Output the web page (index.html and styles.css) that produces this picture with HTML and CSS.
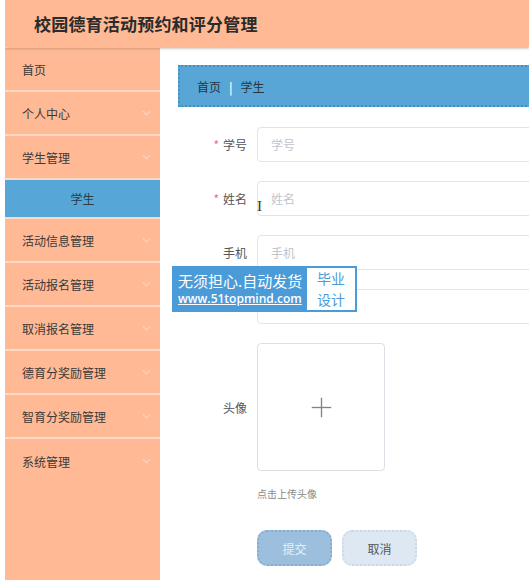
FILE: index.html
```html
<!DOCTYPE html>
<html lang="zh-CN">
<head>
<meta charset="utf-8">
<title>校园德育活动预约和评分管理</title>
<link rel="stylesheet" href="styles.css">
</head>
<body>
<div class="app">
  <header class="topbar">
    <h1 class="title">校园德育活动预约和评分管理</h1>
  </header>
  <div class="layout">
    <nav class="sidebar">
      <div class="menu-item">首页</div>
      <div class="menu-item">个人中心<svg class="chev" viewBox="0 0 10 6"><polyline points="1,1 5,5 9,1"/></svg></div>
      <div class="menu-item">学生管理<svg class="chev" viewBox="0 0 10 6"><polyline points="1,1 5,5 9,1"/></svg></div>
      <div class="menu-item sub active">学生</div>
      <div class="menu-item">活动信息管理<svg class="chev" viewBox="0 0 10 6"><polyline points="1,1 5,5 9,1"/></svg></div>
      <div class="menu-item">活动报名管理<svg class="chev" viewBox="0 0 10 6"><polyline points="1,1 5,5 9,1"/></svg></div>
      <div class="menu-item">取消报名管理<svg class="chev" viewBox="0 0 10 6"><polyline points="1,1 5,5 9,1"/></svg></div>
      <div class="menu-item">德育分奖励管理<svg class="chev" viewBox="0 0 10 6"><polyline points="1,1 5,5 9,1"/></svg></div>
      <div class="menu-item">智育分奖励管理<svg class="chev" viewBox="0 0 10 6"><polyline points="1,1 5,5 9,1"/></svg></div>
      <div class="menu-item last">系统管理<svg class="chev" viewBox="0 0 10 6"><polyline points="1,1 5,5 9,1"/></svg></div>
    </nav>
    <main class="main">
      <div class="breadcrumb">
        <span class="crumb">首页</span>
        <span class="crumb-sep">|</span>
        <span class="crumb">学生</span>
      </div>
      <form class="form">
        <div class="row">
          <label class="label"><span class="req">*</span>学号</label>
          <div class="input">学号</div>
        </div>
        <div class="row">
          <label class="label"><span class="req">*</span>姓名</label>
          <div class="input">姓名</div>
        </div>
        <div class="row">
          <label class="label">手机</label>
          <div class="input">手机</div>
        </div>
        <div class="row">
          <label class="label"></label>
          <div class="input"></div>
        </div>
        <div class="row">
          <label class="label">头像</label>
          <div class="upload">
            <svg class="plus" viewBox="0 0 28 28"><line x1="14" y1="1" x2="14" y2="27"/><line x1="1" y1="14" x2="27" y2="14"/></svg>
          </div>
        </div>
        <div class="tip">点击上传头像</div>
        <div class="buttons">
          <div class="btn primary">提交</div>
          <div class="btn plain">取消</div>
        </div>
      </form>
      <div class="watermark">
        <div class="wm-left">
          <div class="wm-line1">无须担心.自动发货</div>
          <div class="wm-line2">www.51topmind.com</div>
        </div>
        <div class="wm-right">
          <div class="wm-word">毕业</div>
          <div class="wm-word">设计</div>
        </div>
      </div>
      <div class="cursor">I</div>
    </main>
  </div>
</div>
</body>
</html>
```

FILE: styles.css
```css
* { box-sizing: border-box; }
html, body {
  margin: 0;
  padding: 0;
  background: #fff;
  font-family: "Noto Sans CJK SC", "Noto Sans", sans-serif;
}
.app {
  margin-left: 5px;
  height: 580px;
  display: flex;
  flex-direction: column;
  overflow: hidden;
}
.topbar {
  position: relative;
  z-index: 2;
  height: 47px;
  flex: none;
  background: #ffb994;
  padding-left: 29px;
  display: flex;
  align-items: center;
  box-shadow: 0 1px 3px rgba(90, 60, 40, 0.45);
}
.title {
  margin: 0;
  font-size: 17px;
  line-height: 20px;
  font-weight: bold;
  color: #2b2b2b;
  letter-spacing: 0.2px;
}
.layout {
  flex: 1;
  display: flex;
  margin-top: 1px;
  min-height: 0;
}
.sidebar {
  width: 155px;
  flex: none;
  background: #ffb994;
  display: flex;
  flex-direction: column;
}
.menu-item {
  height: 44px;
  border-bottom: 2px solid #ffd9c6;
  padding-left: 17px;
  padding-right: 9px;
  display: flex;
  align-items: center;
  justify-content: space-between;
  font-size: 12px;
  color: #3a3a3a;
}
.menu-item.sub {
  height: 39px;
  justify-content: center;
  padding-left: 0;
  padding-right: 0;
}
.menu-item.active {
  background: #56a7d7;
  color: #2f3b45;
}
.menu-item.last { border-bottom: none; }
.chev {
  width: 9px;
  height: 6px;
  fill: none;
  stroke: #ffd7c3;
  stroke-width: 1.2;
}
.main {
  position: relative;
  flex: 1;
  min-width: 0;
  overflow: hidden;
  padding: 17px 0 0 18px;
  background: #fff;
}
.breadcrumb {
  width: 420px;
  height: 42px;
  background: #57a6d6;
  border: 2px dotted #4a8fbd;
  padding-left: 17px;
  display: flex;
  align-items: center;
  gap: 8px;
  font-size: 12px;
  color: #2a3440;
}
.crumb-sep {
  color: #eef6fb;
  font-weight: bold;
}
.form {
  margin-top: 20px;
  width: 420px;
}
.row {
  display: flex;
  align-items: center;
  margin-bottom: 19px;
}
.label {
  width: 79px;
  flex: none;
  padding-right: 10px;
  text-align: right;
  font-size: 12px;
  color: #555;
}
.req {
  color: #f56c6c;
  margin-right: 4px;
}
.input {
  width: 300px;
  height: 35px;
  border: 1px solid #e2e4ea;
  border-radius: 4px;
  padding-left: 13px;
  display: flex;
  align-items: center;
  font-size: 12px;
  color: #c0c4cc;
}
.upload {
  width: 128px;
  height: 128px;
  border: 1px solid #dcdfe6;
  border-radius: 4px;
  display: flex;
  align-items: center;
  justify-content: center;
}
.plus {
  width: 21px;
  height: 21px;
  stroke: #7d848e;
  stroke-width: 1.8;
}
.tip {
  margin-left: 79px;
  margin-top: -3px;
  font-size: 10px;
  line-height: 14px;
  color: #888;
}
.buttons {
  margin-left: 79px;
  margin-top: 29px;
  display: flex;
  gap: 10px;
}
.btn {
  width: 75px;
  height: 36px;
  border-radius: 10px;
  display: flex;
  align-items: center;
  justify-content: center;
  font-size: 12px;
}
.btn.primary {
  background: #9dbfde;
  border: 2px dotted #87acd0;
  color: #e6eff8;
}
.btn.plain {
  background: #dde8f3;
  border: 2px dotted #cbdaea;
  color: #555;
}
.watermark {
  position: absolute;
  left: 12px;
  top: 218px;
  width: 185px;
  height: 46px;
  background: #4b9bd9;
  display: flex;
  align-items: stretch;
  padding: 2px;
}
.wm-left {
  flex: 1;
  display: flex;
  flex-direction: column;
  justify-content: center;
  padding-left: 4px;
  color: #fff;
}
.wm-line1 {
  font-size: 15px;
  line-height: 20px;
  letter-spacing: 0;
}
.wm-line2 {
  font-family: "Open Sans", "DejaVu Sans", sans-serif;
  font-size: 12px;
  line-height: 16px;
  font-weight: 600;
  text-decoration: underline;
}
.wm-right {
  width: 48px;
  background: #fff;
  color: #4b9bd9;
  display: flex;
  flex-direction: column;
  align-items: center;
  justify-content: center;
}
.wm-word {
  font-size: 14px;
  line-height: 21px;
  height: 21px;
}
.cursor {
  position: absolute;
  left: 97px;
  top: 150px;
  font-family: "Liberation Serif", serif;
  font-size: 15px;
  color: #333;
}
```
